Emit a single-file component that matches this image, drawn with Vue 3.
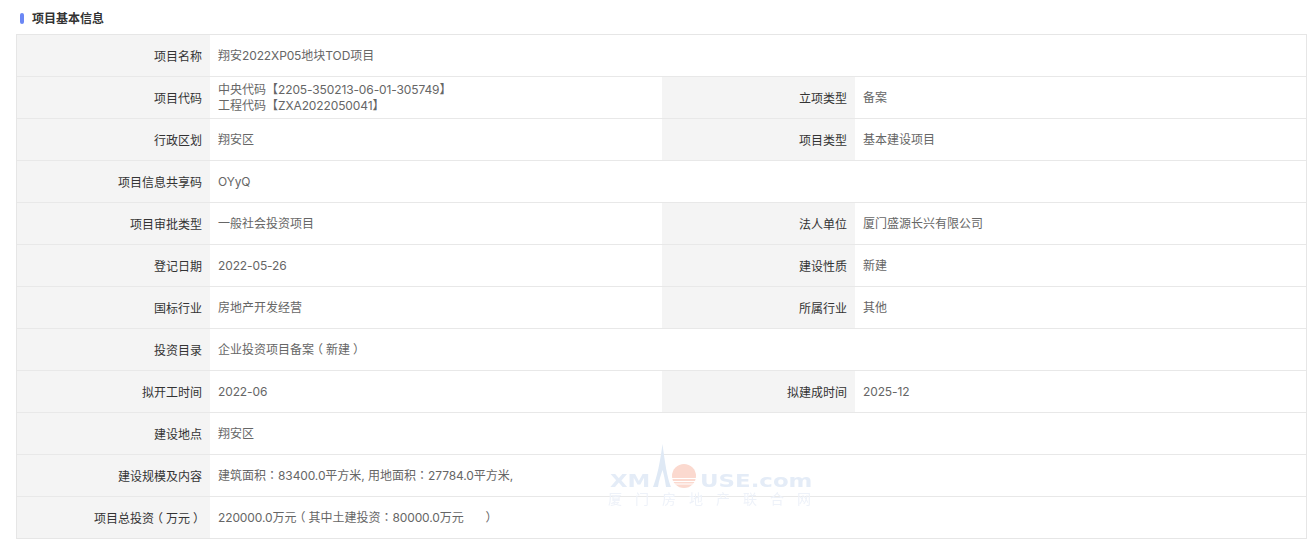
<script setup>
const rows = [
  [['项目名称', ['翔安2022XP05地块TOD项目']]],
  [['项目代码', ['中央代码【2205-350213-06-01-305749】', '工程代码【ZXA2022050041】']], ['立项类型', ['备案']]],
  [['行政区划', ['翔安区']], ['项目类型', ['基本建设项目']]],
  [['项目信息共享码', ['OYyQ']]],
  [['项目审批类型', ['一般社会投资项目']], ['法人单位', ['厦门盛源长兴有限公司']]],
  [['登记日期', ['2022-05-26']], ['建设性质', ['新建']]],
  [['国标行业', ['房地产开发经营']], ['所属行业', ['其他']]],
  [['投资目录', ['企业投资项目备案（新建）']]],
  [['拟开工时间', ['2022-06']], ['拟建成时间', ['2025-12']]],
  [['建设地点', ['翔安区']]],
  [['建设规模及内容', ['建筑面积：83400.0平方米, 用地面积：27784.0平方米,']]],
  [['项目总投资（万元）', ['220000.0万元（其中土建投资：80000.0万元　  ）']]],
]
// Split a line so Latin runs and full-width punctuation can be tuned separately.
const parts = (text) => text.split(/([（）：]|[A-Za-z0-9.,\-]+)/).filter(Boolean)
const kind = (s) => {
  if (s === '（' || s === '）') return 'paren'
  if (s === '：') return 'colon'
  if (/^[A-Za-z0-9.,\-]+$/.test(s)) return 'latin'
  return ''
}
</script>

<template>
  <div class="page">
    <h2 class="title"><i class="mark"></i>项目基本信息</h2>
    <div class="table">
      <div v-for="(row, r) in rows" :key="r" class="row">
        <template v-for="(cell, c) in row" :key="c">
          <div class="label">
            <span>
              <span v-for="(p, i) in parts(cell[0])" :key="i" :class="kind(p)">{{ p }}</span>
            </span>
          </div>
          <div class="value" :class="{ half: row.length === 2 && c === 0 }">
            <div v-for="(line, l) in cell[1]" :key="l" class="line">
              <span v-for="(p, i) in parts(line)" :key="i" :class="kind(p)">{{ p }}</span>
            </div>
          </div>
        </template>
      </div>
      <div class="watermark" aria-hidden="true">
        <svg class="mark-art" width="204" height="50" viewBox="0 0 204 50">
          <path d="M46 44 C50 34 53 20 55.5 1 C58 20 60 34 64 44 L59 44 C58 37 57 32 55.5 27 C54 32 52 37 51 44 Z" fill="#dfe9f5" />
          <circle cx="77" cy="33" r="12" fill="#fbd9cf" />
          <path d="M64 35.5H90M64 38.5H90M64 41H90" stroke="#fff" stroke-width="1" />
        </svg>
        <div class="brand xm">XM</div>
        <div class="brand use">USE.com</div>
        <div class="cn">厦门房地产联合网</div>
      </div>
    </div>
  </div>
</template>

<style scoped>
.page {
  width: 1314px;
  height: 548px;
  box-sizing: border-box;
  padding: 10px 7px 0 16px;
  background: #fff;
  font-family: Inter, "Noto Sans CJK SC", sans-serif;
  font-size: 12px;
  overflow: hidden;
}
.title {
  display: flex;
  align-items: center;
  height: 17px;
  margin: 0 0 7px;
  padding-left: 4px;
  font-size: 12px;
  font-weight: 700;
  line-height: 17px;
  color: #333;
}
.mark {
  width: 4px;
  height: 11px;
  margin-right: 8px;
  border-radius: 2px;
  background: #6b87f5;
}
.table {
  position: relative;
  border: 1px solid #e6e6e6;
  width: 1291px;
  box-sizing: border-box;
}
.row {
  display: flex;
  height: 42px;
  box-sizing: border-box;
  border-top: 1px solid #e8e8e8;
}
.row:first-child {
  border-top: 0;
  height: 41px;
}
.label {
  flex: 0 0 193px;
  box-sizing: border-box;
  display: flex;
  align-items: center;
  justify-content: flex-end;
  padding-right: 8px;
  background: #f4f4f4;
  color: #333;
}
.value {
  flex: 1;
  display: flex;
  flex-direction: column;
  justify-content: center;
  padding-left: 8px;
  color: #666;
  line-height: 16px;
}
.value.half {
  flex: 0 0 452px;
  box-sizing: border-box;
}
.line {
  white-space: pre;
}
.latin {
  letter-spacing: -0.12px;
}
.colon {
  font-family: "Noto Sans CJK TC", sans-serif;
}
.paren {
  display: inline-block;
  width: 12px;
  text-align: center;
  font-family: "Noto Sans CJK SC", sans-serif;
  font-feature-settings: "halt";
}
.watermark {
  position: absolute;
  left: 590px;
  top: 408px;
  width: 204px;
  height: 66px;
  pointer-events: none;
  filter: blur(0.4px);
}
.mark-art {
  position: absolute;
  left: 0;
  top: 0;
}
.brand {
  position: absolute;
  top: 28px;
  font: 700 18px/20px "DejaVu Sans", sans-serif;
  color: #e4ecf7;
  white-space: nowrap;
  transform-origin: left center;
}
.xm {
  left: 3px;
  transform: scaleX(1.27);
}
.use {
  left: 93px;
  transform: scaleX(1.27);
}
.cn {
  position: absolute;
  left: 1px;
  top: 47px;
  font-size: 14px;
  line-height: 18px;
  letter-spacing: 13px;
  color: #eef2f9;
  white-space: nowrap;
}
</style>
